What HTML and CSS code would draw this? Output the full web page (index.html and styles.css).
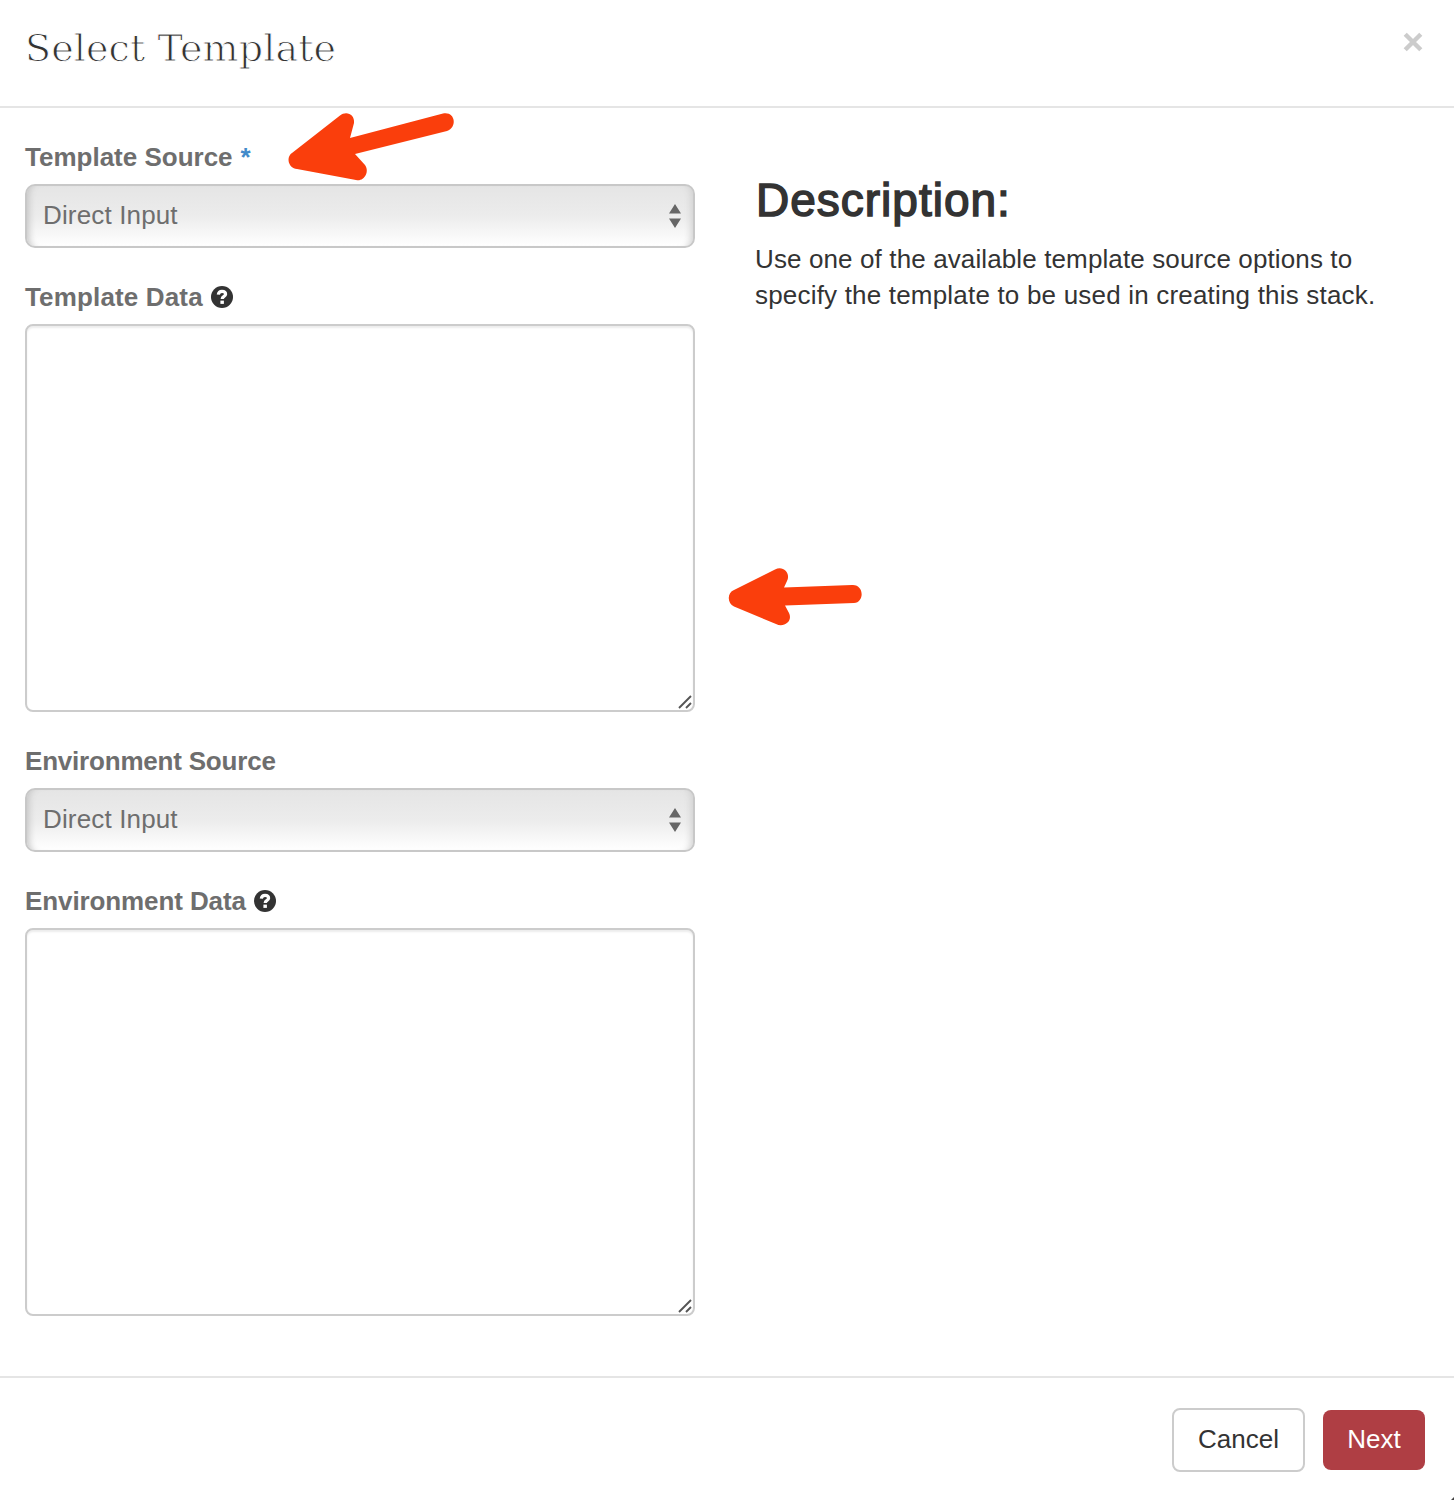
FILE: index.html
```html
<!DOCTYPE html>
<html lang="en">
<head>
<meta charset="utf-8">
<title>Select Template</title>
<link rel="stylesheet" href="styles.css">
</head>
<body>
<main class="modal">
  <header class="modal-header">
    <h1 class="modal-title">Select Template</h1>
    <button class="close" aria-label="Close"><svg width="20" height="20" viewBox="0 0 20 20"><path d="M2.200 2.200 17.800 17.800M17.800 2.200 2.200 17.800"/></svg></button>
  </header>
  <div class="modal-body">
    <form class="fields">
      <div class="field">
        <label class="label"><span class="t-source">Template Source</span><span class="required">*</span></label>
        <div class="select"><span>Direct Input</span><svg width="12" height="24" viewBox="0 0 12 24"><path d="M0 9.500 6 0 12 9.500ZM0 14.500H12L6 24Z"/></svg></div>
      </div>
      <div class="field">
        <label class="label"><span class="t-data">Template Data</span><svg class="help" viewBox="0 0 22 22"><circle cx="11" cy="11" r="11"/><path d="M7.300 8.600C7.600 6.200 9 5.300 11 5.300C13.200 5.300 14.600 6.500 14.600 8.200C14.600 10.500 11.200 10.400 11.200 13"/><rect x="9.400" y="14.600" width="3.500" height="3.300"/></svg></label>
        <div class="textarea"><svg class="grip" viewBox="0 0 14 14"><path d="M1 13 13 1M8 13 13 8"/></svg></div>
      </div>
      <div class="field">
        <label class="label"><span class="e-source">Environment Source</span></label>
        <div class="select"><span>Direct Input</span><svg width="12" height="24" viewBox="0 0 12 24"><path d="M0 9.500 6 0 12 9.500ZM0 14.500H12L6 24Z"/></svg></div>
      </div>
      <div class="field">
        <label class="label"><span class="e-data">Environment Data</span><svg class="help" viewBox="0 0 22 22"><circle cx="11" cy="11" r="11"/><path d="M7.300 8.600C7.600 6.200 9 5.300 11 5.300C13.200 5.300 14.600 6.500 14.600 8.200C14.600 10.500 11.200 10.400 11.200 13"/><rect x="9.400" y="14.600" width="3.500" height="3.300"/></svg></label>
        <div class="textarea"><svg class="grip" viewBox="0 0 14 14"><path d="M1 13 13 1M8 13 13 8"/></svg></div>
      </div>
    </form>
    <section class="description">
      <h2>Description:</h2>
      <p><span class="line-one">Use one of the available template source options to</span><br><span class="line-two">specify the template to be used in creating this stack.</span></p>
    </section>
  </div>
  <footer class="modal-footer">
    <button class="btn cancel">Cancel</button>
    <button class="btn next">Next</button>
  </footer>
  <svg class="arrow arrow-source" viewBox="270 100 200 100"><path d="M340 115.500C346 110.500 355 114 354 123L350 138L443 113.500C455 111 458 127 447 131L355 154L365 165C370 172 364 182 356 180L297 169C288 168 286 157 292 153Z"/></svg>
  <svg class="arrow arrow-data" viewBox="720 560 160 80"><path d="M775 569.500C783 565 791 573 787 581L784 587.500L852 585C864 584 865 602 854 603L785 605.500L789 613C793 621 784 628 776 624L734 606.500C727 603 727 592.500 734 590Z"/></svg>
  <svg class="corner" viewBox="0 0 4 4"><path d="M4 0V4H0Z"/></svg>
</main>
</body>
</html>
```
FILE: styles.css
```css
* { box-sizing: border-box; }
body {
  margin: 0;
  background: #fff;
  color: #333;
  font: 26px/36px "Liberation Sans", Arial, sans-serif;
}
svg { display: block; flex: none; }
button { margin: 0; font: inherit; }
.modal {
  position: relative;
  display: flex;
  flex-direction: column;
  height: 1500px;
  overflow: hidden;
}
.modal-header {
  display: flex;
  justify-content: space-between;
  height: 108px;
  padding: 20px 31px 0 25px;
  border-bottom: 2px solid #e5e5e5;
}
.modal-title {
  margin: 0;
  font: 400 38px/57px "DejaVu Serif", serif;
  letter-spacing: .1px;
  -webkit-text-stroke: 1px #fff;
}
.close {
  align-self: flex-start;
  margin-top: 12px;
  padding: 0;
  border: 0;
  background: none;
}
.close path { fill: none; stroke: #ccc; stroke-width: 4.4; }
.modal-body {
  display: flex;
  gap: 60px;
  height: 1268px;
  padding: 31px 25px 0;
}
.fields {
  display: flex;
  flex-direction: column;
  gap: 31px;
  width: 670px;
}
.field { display: flex; flex-direction: column; gap: 9px; }
.label {
  display: flex;
  align-items: center;
  gap: 8px;
  height: 36px;
  color: #6e6e6e;
  font-weight: 700;
}
.t-data { letter-spacing: .15px; }
.e-source { letter-spacing: -.2px; }
.e-data { letter-spacing: -.1px; }
.required { color: #428bca; }
.help { width: 22px; height: 22px; }
.help circle { fill: #333; }
.help path { fill: none; stroke: #fff; stroke-width: 3.2; }
.help rect { fill: #fff; }
.select {
  display: flex;
  align-items: center;
  justify-content: space-between;
  height: 64px;
  padding: 0 12px 2px 16px;
  border: 2px solid #c8c8c8;
  border-radius: 10px;
  background: linear-gradient(#e5e5e5, #ececec 50%, #fff);
  box-shadow: inset 8px 0 7px -6px #c4c4c4, inset -8px 0 7px -6px #d0d0d0;
  color: #6e6e6e;
  letter-spacing: .15px;
}
.select svg { margin-top: 2px; fill: #666; }
.textarea {
  display: flex;
  align-items: flex-end;
  justify-content: flex-end;
  height: 388px;
  padding: 1px;
  border: 2px solid #ccc;
  border-radius: 8px;
  box-shadow: inset 0 2px 2px rgba(0, 0, 0, .075);
}
.grip { width: 14px; height: 14px; fill: none; stroke: #555; stroke-width: 1.9; }
.description { padding-top: 36px; white-space: nowrap; }
.description h2 {
  margin: 0 0 16px 1px;
  font: 400 46px/50px "Liberation Sans", Arial, sans-serif;
  letter-spacing: 1px;
  -webkit-text-stroke: 1.5px #333;
}
.description p { margin: 0; }
.line-one { letter-spacing: .12px; }
.line-two { letter-spacing: .19px; }
.modal-footer {
  display: flex;
  align-items: center;
  justify-content: flex-end;
  gap: 18px;
  height: 124px;
  padding: 2px 29px 0 0;
  border-top: 2px solid #e5e5e5;
}
.btn { padding: 0 0 2px; border-radius: 8px; }
.cancel { width: 133px; height: 64px; border: 2px solid #ccc; background: #fff; color: #333; }
.next { width: 102px; height: 60px; border: 0; background: #af3e44; color: #fff; }
.arrow { position: absolute; fill: #fa3e0c; }
.arrow-source { left: 270px; top: 100px; width: 200px; height: 100px; }
.arrow-data { left: 720px; top: 560px; width: 160px; height: 80px; }
.corner { position: absolute; right: 0; bottom: 0; width: 3px; height: 3px; fill: #444; }
```
